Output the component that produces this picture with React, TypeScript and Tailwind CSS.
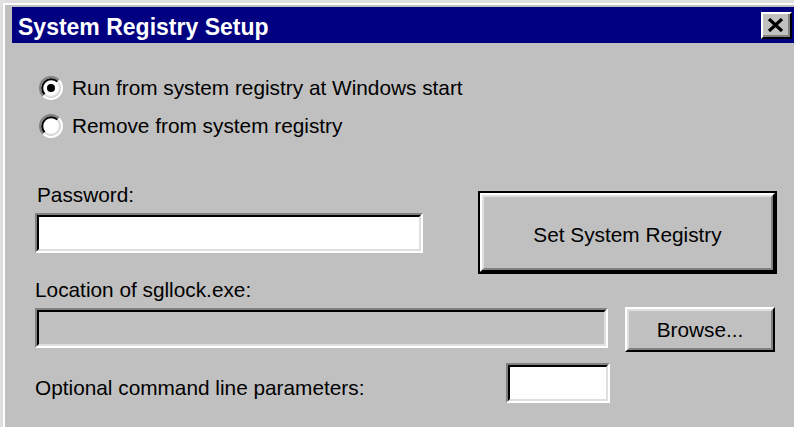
import type { ReactNode } from "react";

// Win95-style sunken edit box
function Field({ className, disabled }: { className: string; disabled?: boolean }) {
  return (
    <div
      className={`border-2 border-t-[#808080] border-l-[#808080] border-b-white border-r-white ${className}`}
    >
      <div
        className={`h-full w-full border-2 border-t-black border-l-black border-b-[#dfdfdf] border-r-[#dfdfdf] ${
          disabled ? "bg-[#c0c0c0]" : "bg-white"
        }`}
      />
    </div>
  );
}

function Button({
  children,
  className,
  isDefault,
}: {
  children: ReactNode;
  className: string;
  isDefault?: boolean;
}) {
  const face = (
    <div className="h-full w-full border-2 border-t-white border-l-white border-b-black border-r-black">
      <div className="h-full w-full border-2 border-t-[#dfdfdf] border-l-[#dfdfdf] border-b-[#808080] border-r-[#808080] flex items-center justify-center text-black leading-[24px]">
        {children}
      </div>
    </div>
  );
  if (isDefault) {
    return <div className={`border-2 border-black ${className}`}>{face}</div>;
  }
  return <div className={className}>{face}</div>;
}

function Radio({ checked, label }: { checked?: boolean; label: string }) {
  return (
    <div className="flex items-center h-[24px]">
      <svg width="24" height="24" viewBox="0 0 24 24" className="shrink-0">
        <circle cx="12" cy="12" r="9" fill="#fff" />
        <path d="M4.22 19.78 A11 11 0 0 1 19.78 4.22" fill="none" stroke="#808080" strokeWidth="2" />
        <path d="M19.78 4.22 A11 11 0 0 1 4.22 19.78" fill="none" stroke="#fff" strokeWidth="2" />
        <path d="M5.64 18.36 A9 9 0 0 1 18.36 5.64" fill="none" stroke="#000" strokeWidth="2" />
        <path d="M18.36 5.64 A9 9 0 0 1 5.64 18.36" fill="none" stroke="#dfdfdf" strokeWidth="2" />
        {checked && <circle cx="12" cy="12" r="4" fill="#000" />}
      </svg>
      <span className="ml-[9px] leading-[24px] text-black">{label}</span>
    </div>
  );
}

export default function App() {
  return (
    <div className="w-[794px] h-[427px] overflow-hidden bg-[#c0c0c0] font-['Liberation_Sans',Arial,sans-serif] text-[20.8px]">
      <div className="h-full border-l-[3px] border-t-[3px] border-[#dfdfdf]">
        <div className="h-full border-l-2 border-t-2 border-white pl-[7px] pt-[2px]">
          {/* title bar */}
          <div className="h-[36px] bg-[#000080] flex items-start justify-between">
            <span className="pl-[6px] pt-[4px] leading-[32px] text-[23px] font-bold text-white">
              System Registry Setup
            </span>
            <div className="mt-[5px] mr-[2px] w-[31px] h-[27px] bg-[#c0c0c0] border-2 border-t-white border-l-white border-b-black border-r-black">
              <div className="h-full w-full border-r-2 border-b-2 border-[#808080] flex items-center justify-center">
                <svg width="17" height="14" viewBox="0 0 17 14">
                  <path d="M2 1 L15 13 M15 1 L2 13" stroke="#000" strokeWidth="3.2" />
                </svg>
              </div>
            </div>
          </div>

          <div className="pl-[23px]">
            <div className="pl-[4px] pt-[33px] flex flex-col gap-[14px]">
              <Radio checked label="Run from system registry at Windows start" />
              <Radio label="Remove from system registry" />
            </div>

            <div className="mt-[45px] flex items-start">
              <div className="flex flex-col">
                <span className="pl-[2px] leading-[24px] text-black">Password:</span>
                <Field className="mt-[6px] w-[388px] h-[40px]" />
              </div>
              <Button isDefault className="ml-[55px] mt-[8px] w-[299px] h-[83px]">
                <span className="pt-[4px]">Set System Registry</span>
              </Button>
            </div>

            <div className="mt-[4px] leading-[24px] text-black">Location of sgllock.exe:</div>
            <div className="mt-[5px] flex items-start">
              <Field disabled className="mt-[1px] w-[573px] h-[40px]" />
              <Button className="ml-[17px] w-[150px] h-[45px]">Browse...</Button>
            </div>

            <div className="mt-[11px] flex items-start">
              <span className="w-[471px] pt-[13px] leading-[24px] text-black">
                Optional command line parameters:
              </span>
              <Field className="w-[104px] h-[40px]" />
            </div>
          </div>
        </div>
      </div>
    </div>
  );
}
